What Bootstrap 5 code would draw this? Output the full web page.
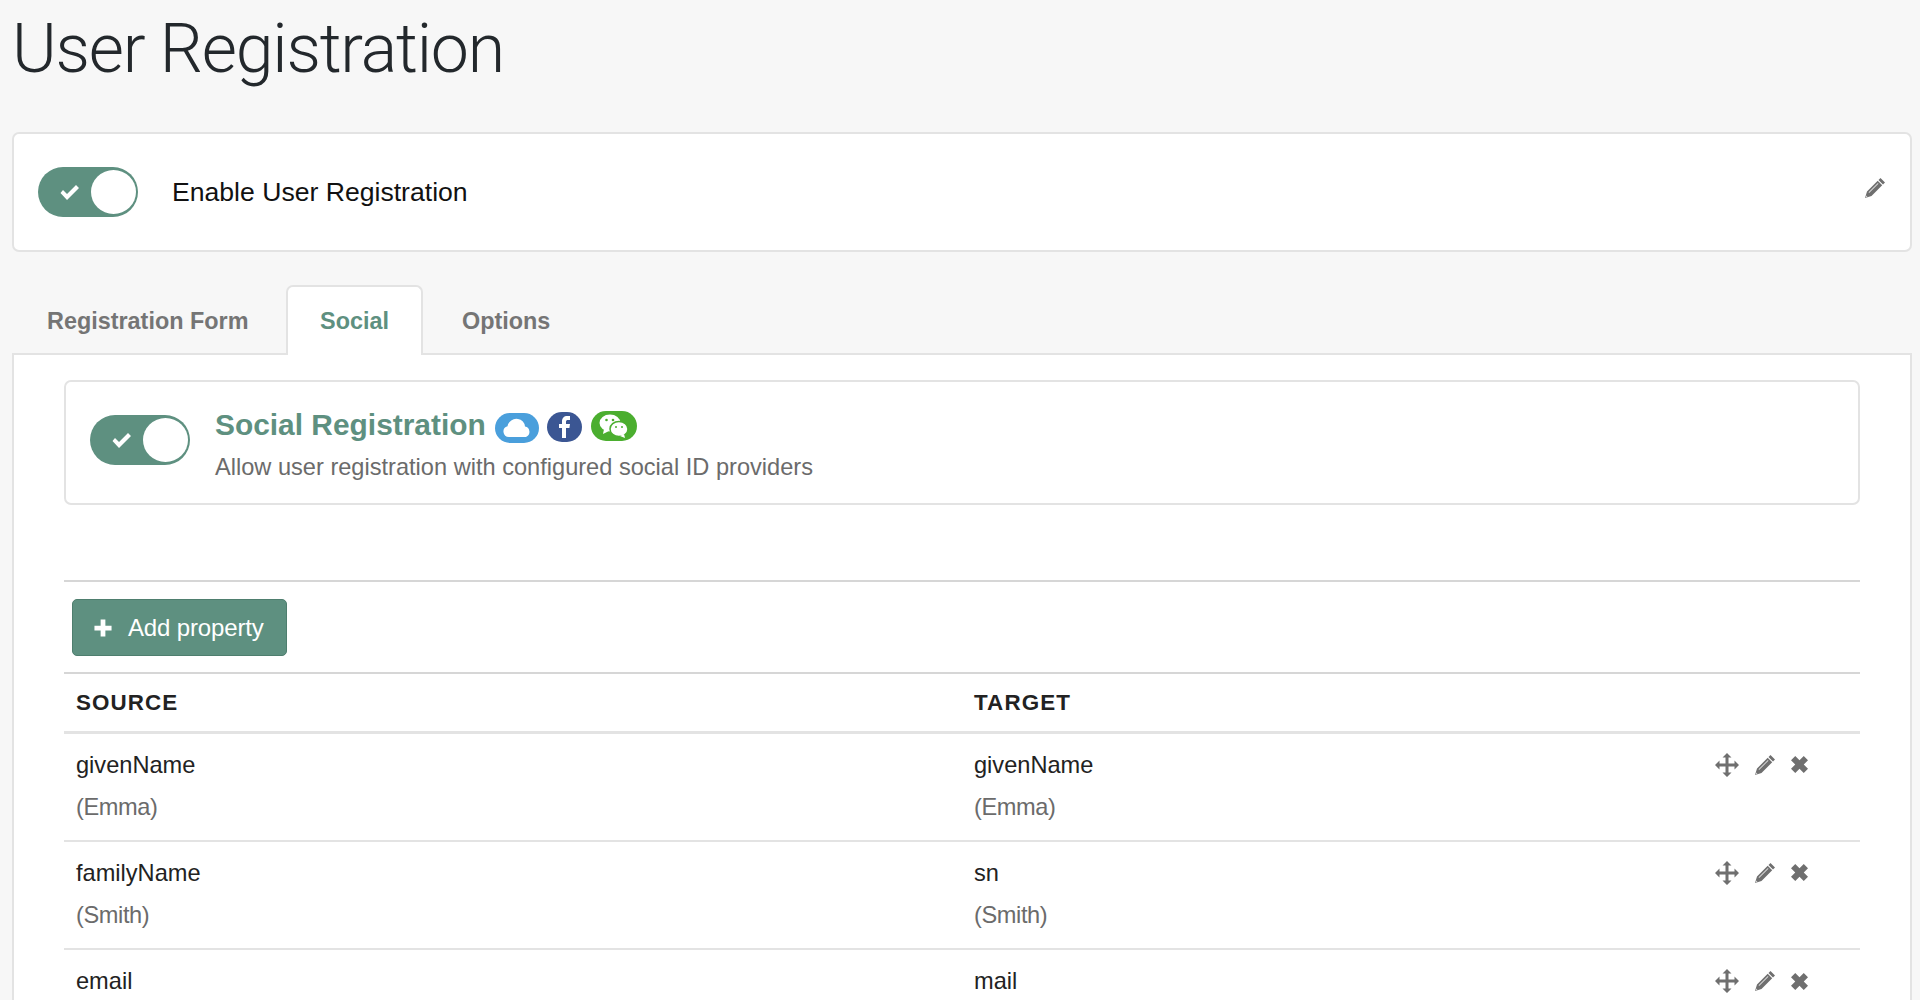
<!DOCTYPE html>
<html lang="en"><head><meta charset="utf-8"><title>User Registration</title>
<link href="https://cdn.jsdelivr.net/npm/bootstrap@5.3.0/dist/css/bootstrap.min.css" rel="stylesheet">
<style>
html,body{height:1000px;overflow:hidden}
body{background:#f7f7f7;font-family:"Liberation Sans",Arial,sans-serif;font-size:24px;color:#222;padding:0 8px 0 12px}
.page-title{font-family:Roboto,"Liberation Sans",sans-serif;font-weight:300;font-size:68px;line-height:78px;margin:10px 0 0;color:#23282c;letter-spacing:-1.2px;height:122px}
.enable-box{height:120px;background:#fff;border:2px solid #e3e3e3;border-radius:7px;padding:0 24px;margin-bottom:34px}
.switcher{width:100px;height:50px;border-radius:25px;background:#5e9080;flex:none;padding:3px 2px 3px 3px;display:flex;justify-content:space-between;align-items:center}
.switcher svg{margin-left:18px}
.knob{width:45px;height:44px;border-radius:50%;background:#fff}
.enable-label{font-size:26.6px;margin-left:34px;color:#111;padding-top:1px}
.ico{fill:#6f6f6f;display:block}
.edit-top{margin-right:1px}
.tab-row{height:69px;margin-bottom:-2px;position:relative;z-index:1;padding:0}
.tab-row .tab-item{font-weight:700;font-size:23.4px;color:#757575;padding:0 20px;display:flex;align-items:center;text-decoration:none;border:2px solid transparent;border-bottom:0;height:70px;padding-top:2px}
.tab-item.tab-first{padding-left:33px;width:274px}
.tab-item.tab-on{background:#fff;border-color:#e3e3e3;border-radius:7px 7px 0 0;color:#5e9080;width:137px;justify-content:center;padding:2px 0 0}
.tab-item.tab-last{padding-left:37px}
.main-panel{background:#fff;border:2px solid #e3e3e3;border-bottom:0;height:700px;padding:25px 50px 0}
.social-box{height:125px;border:2px solid #e3e3e3;border-radius:7px;padding:0 24px;margin-bottom:75px}
.social-box .switcher{margin-top:-5px}
.social-text{margin-left:25px;padding-top:2px}
.social-title{font-size:29.9px;font-weight:700;color:#5e9080;line-height:40px;margin:0;white-space:nowrap}
.social-desc{font-size:23.6px;color:#6b6b6b;line-height:30px;margin-top:7px}
.pillx{height:30px;border-radius:15px;display:inline-flex;align-items:center;justify-content:center;vertical-align:-3px}
.pill-cloud{width:44px;background:#4a9fdc;margin-left:1px}
.pill-fb{width:35px;background:#3b5693}
.pill-wc{width:46px;background:#4bae2f}
.add-zone{border-top:2px solid #d6d6d6;padding:17px 0 16px 8px}
.add-btn{background:#5e9080;border:1px solid #4e7e6e;color:#fff;font-size:24px;border-radius:5px;height:57px;width:215px;padding:0 0 0 20px;display:flex;align-items:center;gap:15px;letter-spacing:-.15px}
.add-btn:hover{background:#5e9080;color:#fff}
.prop-table{width:100%;table-layout:fixed;margin:0;--bs-table-bg:transparent}
.prop-table th{font-size:22.4px;font-weight:700;letter-spacing:1.1px;padding:12px 12px 0;height:59px;border-top:2px solid #d6d6d6;border-bottom:3px solid #e3e3e3;vertical-align:top;color:#222}
.prop-table td{height:108.5px;padding:10px 12px 0;border-bottom:2px solid #e3e3e3;vertical-align:top;font-size:23.6px;line-height:42px;color:#222}
.prop-table td.tool-cell{padding-left:44px}
.dim{color:#6b6b6b;letter-spacing:-.4px}
.row-tools{display:flex;align-items:center;gap:16px;height:42px}
</style></head><body>
<h1 class="page-title">User Registration</h1>
<div class="enable-box d-flex align-items-center position-relative">
  <div class="switcher"><svg width="21" height="17" viewBox="0 0 21 17"><path d="M1.500 9 4 6l4 4 9-9 3 3L8 16z" fill="#fff"/></svg><span class="knob"></span></div>
  <span class="enable-label">Enable User Registration</span>
  <svg class="ico ms-auto mb-2 edit-top" width="20" height="20" viewBox="0 0 20 20"><path d="M15.500 0 20 4.500l-2 2-4.500-4.500zM12.700 2.800l4.500 4.500L6.500 18 0 20l2-6.500z"/><path d="M3.500 14.300l.7.700 9.300-9.300-.7-.7zM1.200 17.500l1.300 1.300-1.800.6z" fill="#fff" opacity=".7"/></svg>
</div>
<div class="tab-row d-flex align-items-end">
  <a class="tab-item tab-first" href="#">Registration Form</a>
  <a class="tab-item tab-on" href="#">Social</a>
  <a class="tab-item tab-last" href="#">Options</a>
</div>
<div class="main-panel">
  <div class="social-box d-flex align-items-center">
    <div class="switcher"><svg width="21" height="17" viewBox="0 0 21 17"><path d="M1.500 9 4 6l4 4 9-9 3 3L8 16z" fill="#fff"/></svg><span class="knob"></span></div>
    <div class="social-text">
      <p class="social-title">Social Registration
        <span class="pillx pill-cloud"><svg width="30" height="20" viewBox="0 0 30 20"><path d="M7 19a5.500 5.500 0 0 1-1.500-10.800A9 9 0 0 1 16 1a8 8 0 0 1 7 7.500A5.500 5.500 0 0 1 24 19z" fill="#fff"/></svg></span>
        <span class="pillx pill-fb"><svg width="13" height="22" viewBox="0 0 13 22"><path d="M4 22V12H1V8h3V5.500C4 2 6 0 9.200 0H12v4h-2c-1.300 0-2 .6-2 2v2h4l-.6 4H8v10z" fill="#fff"/></svg></span>
        <span class="pillx pill-wc"><svg width="30" height="24" viewBox="0 0 30 24"><ellipse cx="11" cy="9" rx="10.500" ry="8.500" fill="#fff"/><path d="M5 15l-1 5 6-3z" fill="#fff"/><ellipse cx="20" cy="15" rx="9" ry="7.500" fill="#fff" stroke="#4bae2f" stroke-width="1.500"/><path d="M25 20l1 4-5-2z" fill="#fff"/><circle cx="7.500" cy="6" r="1.300" fill="#4bae2f"/><circle cx="14" cy="6" r="1.300" fill="#4bae2f"/><circle cx="17" cy="13" r="1" fill="#4bae2f"/><circle cx="23" cy="13" r="1" fill="#4bae2f"/></svg></span>
      </p>
      <div class="social-desc">Allow user registration with configured social ID providers</div>
    </div>
  </div>
  <div class="add-zone"><button class="btn add-btn" type="button"><svg width="20" height="20" viewBox="0 0 20 20"><path d="M7.500 1h5v6.500H19v5h-6.500V19h-5v-6.500H1v-5h6.500z" fill="#fff" transform="translate(10 10) scale(.95) translate(-10 -10)"/></svg>Add property</button></div>
  <table class="table prop-table">
    <colgroup><col style="width:50%"><col style="width:39.500%"><col></colgroup>
    <thead><tr><th>SOURCE</th><th>TARGET</th><th></th></tr></thead>
    <tbody>
      <tr><td>givenName<br><span class="dim">(Emma)</span></td><td>givenName<br><span class="dim">(Emma)</span></td><td class="tool-cell"><div class="row-tools">
        <svg class="ico" width="24" height="24" viewBox="0 0 24 24"><path d="M12 0l4.500 4.500h-3V10.500h6v-3L24 12l-4.500 4.500v-3h-6v6h3L12 24l-4.500-4.500h3v-6h-6v3L0 12l4.500-4.500v3h6v-6h-3z"/></svg>
        <svg class="ico" width="20" height="20" viewBox="0 0 20 20"><path d="M15.500 0 20 4.500l-2 2-4.500-4.500zM12.700 2.800l4.500 4.500L6.500 18 0 20l2-6.500z"/><path d="M3.500 14.300l.7.700 9.300-9.300-.7-.7zM1.200 17.500l1.300 1.300-1.800.6z" fill="#fff" opacity=".7"/></svg>
        <svg class="ico" width="17" height="17" viewBox="0 0 16 16"><path d="M4 0l4 4 4-4 4 4-4 4 4 4-4 4-4-4-4 4-4-4 4-4-4-4z"/></svg>
      </div></td></tr>
      <tr><td>familyName<br><span class="dim">(Smith)</span></td><td>sn<br><span class="dim">(Smith)</span></td><td class="tool-cell"><div class="row-tools">
        <svg class="ico" width="24" height="24" viewBox="0 0 24 24"><path d="M12 0l4.500 4.500h-3V10.500h6v-3L24 12l-4.500 4.500v-3h-6v6h3L12 24l-4.500-4.500h3v-6h-6v3L0 12l4.500-4.500v3h6v-6h-3z"/></svg>
        <svg class="ico" width="20" height="20" viewBox="0 0 20 20"><path d="M15.500 0 20 4.500l-2 2-4.500-4.500zM12.700 2.800l4.500 4.500L6.500 18 0 20l2-6.500z"/><path d="M3.500 14.300l.7.700 9.300-9.300-.7-.7zM1.200 17.500l1.300 1.300-1.800.6z" fill="#fff" opacity=".7"/></svg>
        <svg class="ico" width="17" height="17" viewBox="0 0 16 16"><path d="M4 0l4 4 4-4 4 4-4 4 4 4-4 4-4-4-4 4-4-4 4-4-4-4z"/></svg>
      </div></td></tr>
      <tr><td>email</td><td>mail</td><td class="tool-cell"><div class="row-tools">
        <svg class="ico" width="24" height="24" viewBox="0 0 24 24"><path d="M12 0l4.500 4.500h-3V10.500h6v-3L24 12l-4.500 4.500v-3h-6v6h3L12 24l-4.500-4.500h3v-6h-6v3L0 12l4.500-4.500v3h6v-6h-3z"/></svg>
        <svg class="ico" width="20" height="20" viewBox="0 0 20 20"><path d="M15.500 0 20 4.500l-2 2-4.500-4.500zM12.700 2.800l4.500 4.500L6.500 18 0 20l2-6.500z"/><path d="M3.500 14.300l.7.700 9.300-9.300-.7-.7zM1.200 17.500l1.300 1.300-1.800.6z" fill="#fff" opacity=".7"/></svg>
        <svg class="ico" width="17" height="17" viewBox="0 0 16 16"><path d="M4 0l4 4 4-4 4 4-4 4 4 4-4 4-4-4-4 4-4-4 4-4-4-4z"/></svg>
      </div></td></tr>
    </tbody>
  </table>
</div>
</body></html>
